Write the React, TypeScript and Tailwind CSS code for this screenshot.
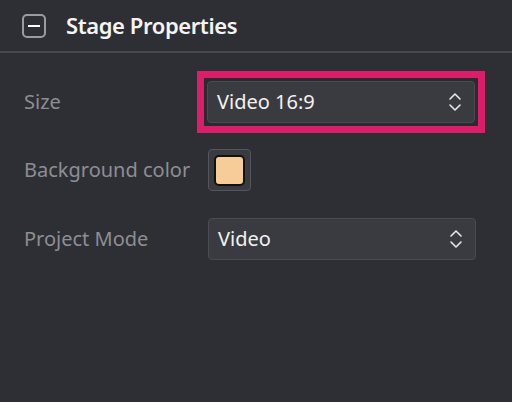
function SelectBox({ value }: { value: string }) {
  return (
    <div className="flex items-center justify-between w-[268px] h-[42px] pl-[9px] pr-[12px] rounded-[4px] border border-[#4a4b51] bg-[#3a3b40]">
      <span className="text-[20px] text-[#f2f2f2]">{value}</span>
      <Chevrons />
    </div>
  )
}

function Chevrons() {
  return (
    <svg width="14" height="20" viewBox="0 0 14 20" fill="none" stroke="#e8e8e8" strokeWidth="1.6" strokeLinecap="round" strokeLinejoin="round">
      <path d="M2 7 L7 2 L12 7" />
      <path d="M2 13 L7 18 L12 13" />
    </svg>
  )
}

export default function App() {
  return (
    <div className="w-[512px] h-[402px] bg-[#2e2f34] font-['Noto_Sans',sans-serif] overflow-hidden">
      <header className="flex items-center gap-[20px] h-[53px] pl-[22px] border-b-2 border-[#46474c]">
        <div className="w-[24px] h-[24px] rounded-[5px] border-2 border-[#9b9ca0] flex items-center justify-center">
          <div className="w-[12px] h-[2px] bg-white" />
        </div>
        <h1 className="text-[22px] font-semibold text-[#f4f4f4] tracking-[-0.4px]">Stage Properties</h1>
      </header>

      <div className="flex flex-col pl-[24px] pt-[16px]">
        <div className="flex items-center h-[66px]">
          <span className="w-[173px] text-[20px] text-[#8d8e93]">Size</span>
          <div className="p-[3px] border-[7px] border-[#dc1d69] bg-[#2a2b30]">
            <SelectBox value="Video 16:9" />
          </div>
        </div>

        <div className="flex items-center h-[70px]">
          <span className="w-[184px] text-[20px] text-[#8d8e93]">Background color</span>
          <div className="w-[43px] h-[42px] rounded-[4px] border border-[#55565c] bg-[#3a3b40] flex items-center justify-center">
            <div className="w-[31px] h-[31px] rounded-[5px] border-2 border-[#111] bg-[#f6cd99]" />
          </div>
        </div>

        <div className="flex items-center h-[68px]">
          <span className="w-[184px] text-[20px] text-[#8d8e93]">Project Mode</span>
          <SelectBox value="Video" />
        </div>
      </div>
    </div>
  )
}
